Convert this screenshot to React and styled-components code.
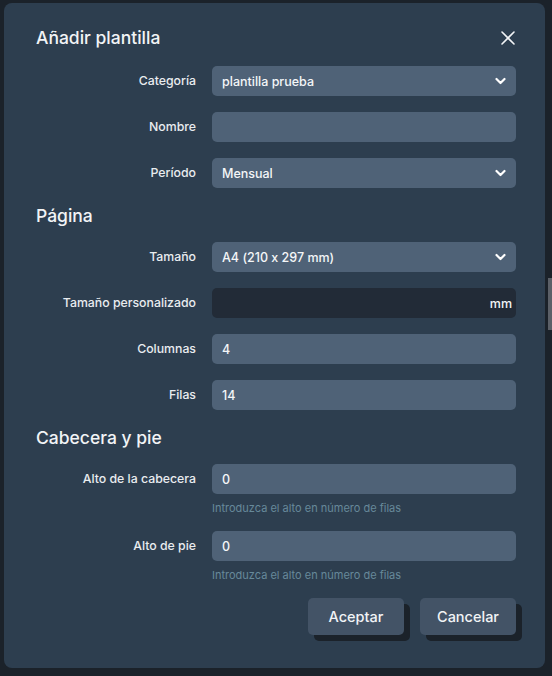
import React from 'react';
import styled, { createGlobalStyle } from 'styled-components';

const GlobalStyle = createGlobalStyle`
  html, body {
    margin: 0;
    padding: 0;
    background: #1b222a;
    font-family: Inter, "Noto Sans", sans-serif;
    font-feature-settings: "calt" 0;
  }
`;

const Page = styled.div`
  display: flex;
  align-items: flex-start;
  width: 552px;
  height: 676px;
`;

const Modal = styled.div`
  box-sizing: border-box;
  width: 541px;
  height: 665px;
  margin: 3px 0 0 4px;
  padding: 23px 29px 32px 32px;
  background: #2d3e4f;
  border-radius: 8px;
  color: #eef1f4;
`;

const ScrollTrack = styled.div`
  margin-left: 3px;
  width: 4px;
  padding-top: 278px;
`;

const Thumb = styled.div`
  height: 52px;
  background: #5b6068;
`;

const Header = styled.div`
  display: flex;
  align-items: center;
  justify-content: space-between;
  height: 24px;
  margin-bottom: 16px;
`;

const Title = styled.h2`
  margin: 0;
  font-size: 17.5px;
  font-weight: 500;
  line-height: 24px;
  color: #f2f4f6;
`;

const Close = styled.button`
  display: flex;
  padding: 0;
  border: 0;
  background: none;
  color: #f2f4f6;
  cursor: pointer;
`;

const Section = styled.h3`
  margin: 16px 0 14px;
  font-size: 17.5px;
  font-weight: 500;
  line-height: 24px;
  color: #f2f4f6;
`;

const Form = styled.div`
  display: grid;
  grid-template-columns: 160px 304px;
  column-gap: 16px;
  row-gap: 16px;
  align-items: start;
`;

const Label = styled.label`
  height: 30px;
  line-height: 30px;
  text-align: right;
  font-size: 12.3px;
  font-weight: 500;
  color: #e9ecef;
  white-space: nowrap;
`;

const Field = styled.div`
  display: flex;
  flex-direction: column;
`;

const Box = styled.div`
  box-sizing: border-box;
  display: flex;
  align-items: center;
  justify-content: space-between;
  height: 30px;
  padding: 0 10px;
  border-radius: 5px;
  background: ${({ $dark }) => ($dark ? '#222b37' : '#4f6277')};
  font-size: 12.5px;
  font-weight: 500;
  color: #f4f6f8;
`;

const Suffix = styled.span`
  margin-left: auto;
  margin-right: -6px;
`;

const Help = styled.div`
  margin-top: 7px;
  font-size: 11px;
  line-height: 14px;
  color: #67899a;
`;

const Actions = styled.div`
  display: flex;
  justify-content: flex-end;
  gap: 16px;
  margin-top: 16px;
`;

const Button = styled.button`
  width: 96px;
  height: 37px;
  border: 0;
  border-radius: 5px;
  background: #435366;
  box-shadow: 6px 6px 0 #1b222a;
  font-family: inherit;
  font-size: 14.5px;
  font-weight: 500;
  color: #f2f4f6;
  cursor: pointer;
`;

const Chevron = () => (
  <svg width="11" height="8" viewBox="0 0 11 8" fill="none" stroke="#ffffff" strokeWidth="2.2" strokeLinecap="round" strokeLinejoin="round">
    <polyline points="1.5,2 5.5,6 9.5,2" />
  </svg>
);

const Row = ({ label, value, select, dark, suffix, help }) => (
  <>
    <Label>{label}</Label>
    <Field>
      <Box $dark={dark}>
        <span>{value}</span>
        {select && <Chevron />}
        {suffix && <Suffix>{suffix}</Suffix>}
      </Box>
      {help && <Help>{help}</Help>}
    </Field>
  </>
);

const helpText = 'Introduzca el alto en número de filas';

export default function App() {
  return (
    <Page>
      <GlobalStyle />
      <Modal>
        <Header>
          <Title>Añadir plantilla</Title>
          <Close aria-label="Cerrar">
            <svg width="16" height="16" viewBox="0 0 16 16" stroke="currentColor" strokeWidth="1.6" strokeLinecap="round">
              <line x1="2" y1="2" x2="14" y2="14" />
              <line x1="14" y1="2" x2="2" y2="14" />
            </svg>
          </Close>
        </Header>
        <Form>
          <Row label="Categoría" value="plantilla prueba" select />
          <Row label="Nombre" value="" />
          <Row label="Período" value="Mensual" select />
        </Form>
        <Section>Página</Section>
        <Form>
          <Row label="Tamaño" value="A4 (210 x 297 mm)" select />
          <Row label="Tamaño personalizado" value="" dark suffix="mm" />
          <Row label="Columnas" value="4" />
          <Row label="Filas" value="14" />
        </Form>
        <Section>Cabecera y pie</Section>
        <Form>
          <Row label="Alto de la cabecera" value="0" help={helpText} />
          <Row label="Alto de pie" value="0" help={helpText} />
        </Form>
        <Actions>
          <Button>Aceptar</Button>
          <Button>Cancelar</Button>
        </Actions>
      </Modal>
      <ScrollTrack>
        <Thumb />
      </ScrollTrack>
    </Page>
  );
}
